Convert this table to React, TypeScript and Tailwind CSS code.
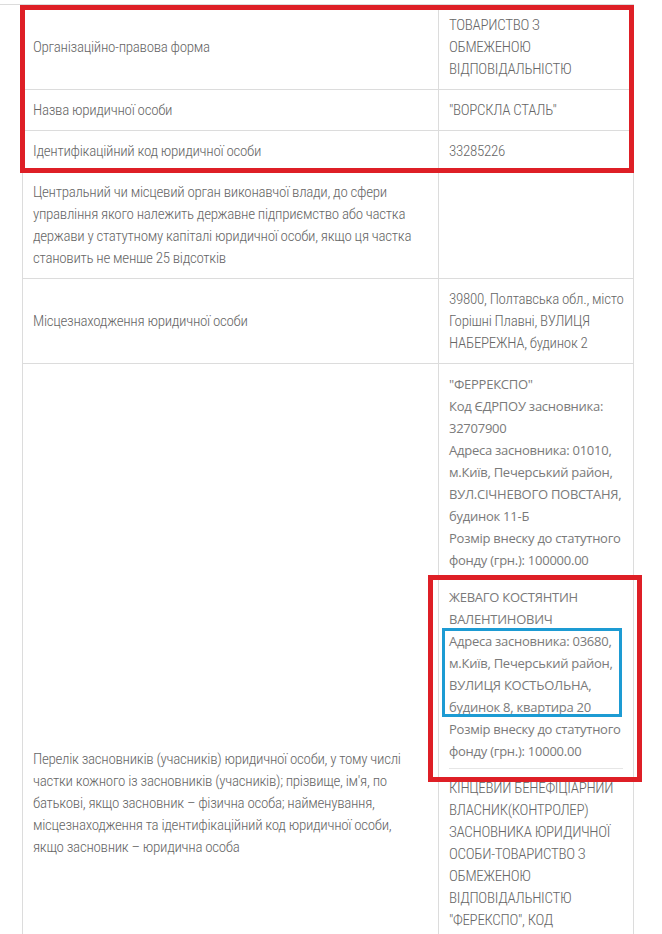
import React from "react";

const N = "whitespace-nowrap font-['Roboto_Condensed','DejaVu_Sans_Condensed','Liberation_Sans_Narrow',sans-serif] font-stretch-condensed font-light text-[15px] tracking-[-0.3px] leading-[22px] text-[#666666]";
const O = "whitespace-nowrap font-['Open_Sans',sans-serif] text-[13px] tracking-[-0.25px] leading-[22px] text-[#7a7a7a]";

function Row({ left, right, className = "" }: { left: React.ReactNode; right?: React.ReactNode; className?: string }) {
  return (
    <div className={`flex border-b border-[#dcdcdc] ${className}`}>
      <div className={`w-[416px] shrink-0 border-r border-[#dcdcdc] px-[10px] py-[9px] flex items-center ${N}`}>
        <div>{left}</div>
      </div>
      <div className="flex-1 pl-[10px] py-[9px]">{right}</div>
    </div>
  );
}

export default function App() {
  return (
    <div className="relative w-[662px] h-[934px] overflow-hidden bg-white">
      <div className="h-[4px]" />
      <div className="h-px w-[634px] bg-[#dcdcdc]" />
      <div className="ml-[22px] w-[612px] border-l border-r border-[#dcdcdc]">
        <Row
          left="Організаційно-правова форма"
          right={
            <div className={N}>
              ТОВАРИСТВО З<br />ОБМЕЖЕНОЮ<br />ВІДПОВІДАЛЬНІСТЮ
            </div>
          }
        />
        <Row left="Назва юридичної особи" right={<div className={N}>"ВОРСКЛА СТАЛЬ"</div>} />
        <Row left="Ідентифікаційний код юридичної особи" right={<div className={N}>33285226</div>} />
        <Row
          left={
            <>
              Центральний чи місцевий орган виконавчої влади, до сфери
              <br />
              управління якого належить державне підприємство або частка
              <br />
              держави у статутному капіталі юридичної особи, якщо ця частка
              <br />
              становить не менше 25 відсотків
            </>
          }
        />
        <Row
          left="Місцезнаходження юридичної особи"
          right={
            <div className={N}>
              39800, Полтавська обл., місто
              <br />
              Горішні Плавні, ВУЛИЦЯ
              <br />
              НАБЕРЕЖНА, будинок 2
            </div>
          }
        />
        <Row
          className="min-h-[878px]"
          left={
            <>
              Перелік засновників (учасників) юридичної особи, у тому числі
              <br />
              частки кожного із засновників (учасників); прізвище, ім'я, по
              <br />
              батькові, якщо засновник – фізична особа; найменування,
              <br />
              місцезнаходження та ідентифікаційний код юридичної особи,
              <br />
              якщо засновник – юридична особа
            </>
          }
          right={
            <div>
              <div className={O}>
                "ФЕРРЕКСПО"
                <br />
                Код ЄДРПОУ засновника:
                <br />
                32707900
                <br />
                Адреса засновника: 01010,
                <br />
                м.Київ, Печерський район,
                <br />
                ВУЛ.СІЧНЕВОГО ПОВСТАНЯ,
                <br />
                будинок 11-Б
                <br />
                Розмір внеску до статутного
                <br />
                фонду (грн.): 100000.00
              </div>
              <div className="mt-[6px] mb-[8px] mr-[10px] h-px bg-[#e6e6e6]" />
              <div className={O}>
                ЖЕВАГО КОСТЯНТИН
                <br />
                ВАЛЕНТИНОВИЧ
                <br />
                Адреса засновника: 03680,
                <br />
                м.Київ, Печерський район,
                <br />
                ВУЛИЦЯ КОСТЬОЛЬНА,
                <br />
                будинок 8, квартира 20
                <br />
                Розмір внеску до статутного
                <br />
                фонду (грн.): 10000.00
              </div>
              <div className="mt-[6px] mb-[8px] mr-[10px] h-px bg-[#e6e6e6]" />
              <div className={N}>
                КІНЦЕВИЙ БЕНЕФІЦІАРНИЙ
                <br />
                ВЛАСНИК(КОНТРОЛЕР)
                <br />
                ЗАСНОВНИКА ЮРИДИЧНОЇ
                <br />
                ОСОБИ-ТОВАРИСТВО З
                <br />
                ОБМЕЖЕНОЮ
                <br />
                ВІДПОВІДАЛЬНІСТЮ
                <br />
                "ФЕРЕКСПО", КОД
                <br />
                ЄДРПОУ 32707900
              </div>
            </div>
          }
        />
      </div>

      <div className="pointer-events-none absolute left-[20px] top-[5px] w-[614px] h-[168px] border-[5px] border-[#de1f26]" />
      <div className="pointer-events-none absolute left-[428px] top-[575px] w-[214px] h-[207px] border-[5px] border-[#de1f26]" />
      <div className="pointer-events-none absolute left-[442px] top-[628px] w-[180px] h-[89px] border-[3px] border-[#1d9bd3]" />
    </div>
  );
}
